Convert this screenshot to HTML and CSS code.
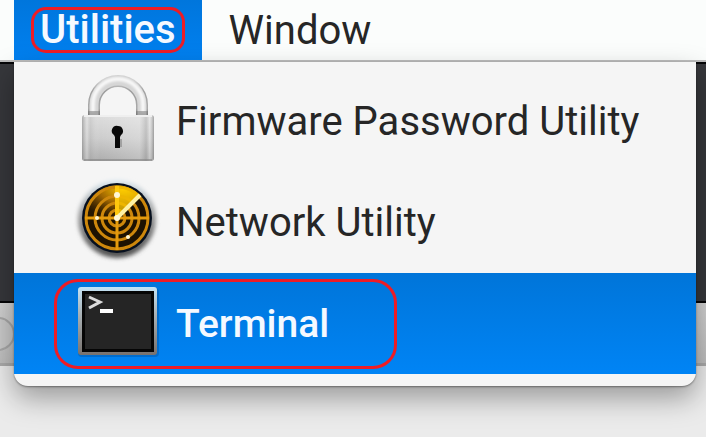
FILE: index.html
```html
<!DOCTYPE html>
<html lang="en">
<head>
<meta charset="utf-8">
<title>Utilities menu</title>
<link rel="stylesheet" href="styles.css">
</head>
<body>
<nav class="menubar" aria-label="Menu bar">
  <button class="tab tab-open" type="button" aria-expanded="true"><span class="tab-ring">Utilities</span></button>
  <button class="tab" type="button">Window</button>
</nav>
<main class="desktop">
  <div class="wallpaper"></div>
  <div class="toolbar"><span class="knob"></span></div>
  <div class="panel"></div>
  <div class="menu" role="menu">
    <button class="item" type="button" role="menuitem">
      <svg class="icon" viewBox="0 0 100 100" aria-hidden="true">
        <defs>
          <linearGradient id="body" x1="0" y1="0" x2="0" y2="1">
            <stop offset="0" stop-color="#dedede"/><stop offset=".5" stop-color="#cdcdcd"/><stop offset="1" stop-color="#adadad"/>
          </linearGradient>
          <linearGradient id="side" x1="0" x2="1" y1="0" y2="0">
            <stop offset="0" stop-color="#777" stop-opacity=".5"/><stop offset=".07" stop-color="#eee" stop-opacity=".35"/><stop offset=".12" stop-color="#999" stop-opacity=".2"/><stop offset=".25" stop-color="#fff" stop-opacity="0"/><stop offset=".8" stop-color="#fff" stop-opacity=".2"/><stop offset=".89" stop-color="#888" stop-opacity=".25"/><stop offset=".94" stop-color="#fff" stop-opacity=".3"/><stop offset="1" stop-color="#666" stop-opacity=".5"/>
          </linearGradient>
          <linearGradient id="leg" x1="0" y1="0" x2="0" y2="1">
            <stop offset="0" stop-color="#d0d0d0"/><stop offset=".3" stop-color="#9c9c9c"/><stop offset=".8" stop-color="#aaa"/><stop offset="1" stop-color="#808080"/>
          </linearGradient>
          <filter id="blur" x="-20%" y="-20%" width="140%" height="140%"><feGaussianBlur stdDeviation="1"/></filter>
        </defs>
        <path d="M26 43V33a24 24 0 0 1 48 0v10" fill="none" stroke="url(#leg)" stroke-width="12"/>
        <path d="M26 43V33a24 24 0 0 1 48 0v10" fill="none" stroke="#d6d6d6" stroke-width="9"/>
        <path d="M25 40V32a25 25 0 0 1 50 0v8" fill="none" stroke="#f8f8f8" stroke-width="4" filter="url(#blur)"/>
        <path d="M20 39h12v4H20zM68 39h12v4H68z" fill="#777" opacity=".5"/>
        <rect x="14" y="43" width="72" height="46" rx="3" fill="url(#body)"/>
        <rect x="14" y="43" width="72" height="46" rx="3" fill="url(#side)"/>
        <path d="M16 44h68" stroke="#efefef" stroke-width="2"/>
        <path d="M16 88h68" stroke="#858585" stroke-width="2" opacity=".6"/>
        <path d="M50 54a5 5 0 0 1 3 9l-1 2v11h-5V65l-1-2a5 5 0 0 1 4-9z" fill="#090909"/>
        <path d="M53 67v8" stroke="#777" stroke-width="1"/>
      </svg>
      <span>Firmware Password Utility</span>
    </button>
    <button class="item" type="button" role="menuitem">
      <svg class="icon" viewBox="0 0 100 100" aria-hidden="true">
        <defs>
          <linearGradient id="rim" x1="0" y1="0" x2="0" y2="1">
            <stop offset="0" stop-color="#dce9f1"/><stop offset=".45" stop-color="#999"/><stop offset="1" stop-color="#4c4c4c"/>
          </linearGradient>
          <radialGradient id="glow" cx=".7" cy=".1" r=".9">
            <stop offset="0" stop-color="#ffcc00"/><stop offset=".5" stop-color="#d88b00" stop-opacity=".7"/><stop offset="1" stop-color="#7a4700" stop-opacity=".1"/>
          </radialGradient>
          <filter id="soft" x="-20%" y="-20%" width="140%" height="140%"><feGaussianBlur stdDeviation="2"/></filter>
          <filter id="fine"><feGaussianBlur stdDeviation=".6"/></filter>
        </defs>
        <circle cx="49" cy="46" r="39" fill="url(#rim)" filter="url(#soft)"/>
        <circle cx="49" cy="45" r="35" fill="#07101f"/>
        <circle cx="49" cy="45" r="31" fill="#1d1202"/>
        <g filter="url(#fine)">
          <path d="M49 45 72 22A32 32 0 0 0 17 45z" fill="url(#glow)"/>
          <g fill="none" stroke="#cd8708" stroke-width="3">
            <circle cx="49" cy="45" r="31"/><circle cx="49" cy="45" r="22"/><circle cx="49" cy="45" r="15"/><circle cx="49" cy="45" r="8"/>
          </g>
          <path d="M49 45 72 22A32 32 0 0 0 49 13z" fill="#ffcf00" opacity=".65"/>
          <path d="M49 13v64M17 45h64" stroke="#e59b0b" stroke-width="3"/>
          <path d="M49 13v30" stroke="#ffc80b" stroke-width="4"/>
          <path d="M49 45 72 22" stroke="#fff2a5" stroke-width="4"/>
          <g fill="#fff7d5"><circle cx="49" cy="45" r="3"/><circle cx="29" cy="45" r="2"/><circle cx="49" cy="22" r="3"/><circle cx="60" cy="64" r="2"/></g>
        </g>
      </svg>
      <span>Network Utility</span>
    </button>
    <button class="item item-active" type="button" role="menuitem">
      <span class="item-ring"></span>
      <svg class="icon" viewBox="0 0 100 100" aria-hidden="true">
        <defs>
          <linearGradient id="frame" x1="0" y1="0" x2="0" y2="1">
            <stop offset="0" stop-color="#c3e3f5"/><stop offset=".4" stop-color="#a9b1b5"/><stop offset="1" stop-color="#77716d"/>
          </linearGradient>
        </defs>
        <rect x="10" y="14" width="81" height="69" rx="4" fill="#003e82" opacity=".3"/>
        <rect x="10" y="13" width="79" height="68" rx="3" fill="url(#frame)"/>
        <rect x="14" y="17" width="72" height="61" fill="#050505"/>
        <rect x="17" y="20" width="66" height="55" fill="#252525"/>
        <path d="m21 23 11 5-11 6" fill="none" stroke="#dcdcdc" stroke-width="3"/>
        <path d="M32 37h13" stroke="#fff" stroke-width="4"/>
      </svg>
      <span>Terminal</span>
    </button>
  </div>
</main>
</body>
</html>
```
FILE: styles.css
```css
* {
  box-sizing: border-box;
}

body {
  display: flex;
  flex-direction: column;
  min-height: 100vh;
  margin: 0;
  overflow: hidden;
  background: #ebebeb;
  color: #262626;
  font-family: Roboto, "Liberation Sans", sans-serif;
}

button {
  margin: 0;
  border: 0;
  background: none;
  color: inherit;
  font: inherit;
  text-align: left;
}

.menubar {
  display: flex;
  height: 62px;
  padding-left: 14px;
  border-bottom: 2px solid #bdbdbd;
  background: #fbfdfc;
  font-size: 40px;
}

.tab {
  display: flex;
  align-items: center;
  padding: 0 27px;
}

.tab-open {
  padding: 0 17px;
  background: linear-gradient(#0076dc, #0080f0);
  color: #f5f9ff;
  font-weight: 500;
}

.tab-ring {
  padding: 0 6px;
  border: 3px solid #ee1c25;
  border-radius: 15px;
  line-height: 40px;
}

.desktop {
  position: relative;
  display: flex;
  flex: 1;
  flex-direction: column;
}

.wallpaper {
  height: 241px;
  border: solid #050507;
  border-width: 2px 0;
  background: #36373b;
}

.toolbar {
  height: 63px;
  border-bottom: 3px solid #aaa;
  background: linear-gradient(#d2d2d2, #bebebe);
}

.knob {
  display: block;
  width: 34px;
  height: 34px;
  margin: 14px 0 0 -19px;
  border: 2px solid #a8a8a8;
  border-radius: 50%;
  background: #c9c9c9;
}

.panel {
  flex: 1;
  background: #ebebeb;
}

.menu {
  position: absolute;
  top: 0;
  right: 10px;
  left: 14px;
  padding: 9px 0 12px;
  border-radius: 0 0 14px 14px;
  background: #f5f5f5;
  box-shadow: 0 1px 2px rgba(0, 0, 0, .4), 0 12px 28px rgba(0, 0, 0, .35);
  font-size: 40px;
}

.item {
  position: relative;
  display: flex;
  align-items: center;
  width: 100%;
  height: 101px;
  padding: 0 54px;
  gap: 8px;
}

.item-active {
  background: linear-gradient(#0075d9, #0084f5);
  color: #f5f9ff;
  font-size: 39px;
  font-weight: 500;
}

.item-ring {
  position: absolute;
  top: 6px;
  left: 40px;
  width: 343px;
  height: 90px;
  border: 3px solid #ee1c25;
  border-radius: 24px;
}

.icon {
  flex: none;
  width: 100px;
  height: 100px;
}
```
